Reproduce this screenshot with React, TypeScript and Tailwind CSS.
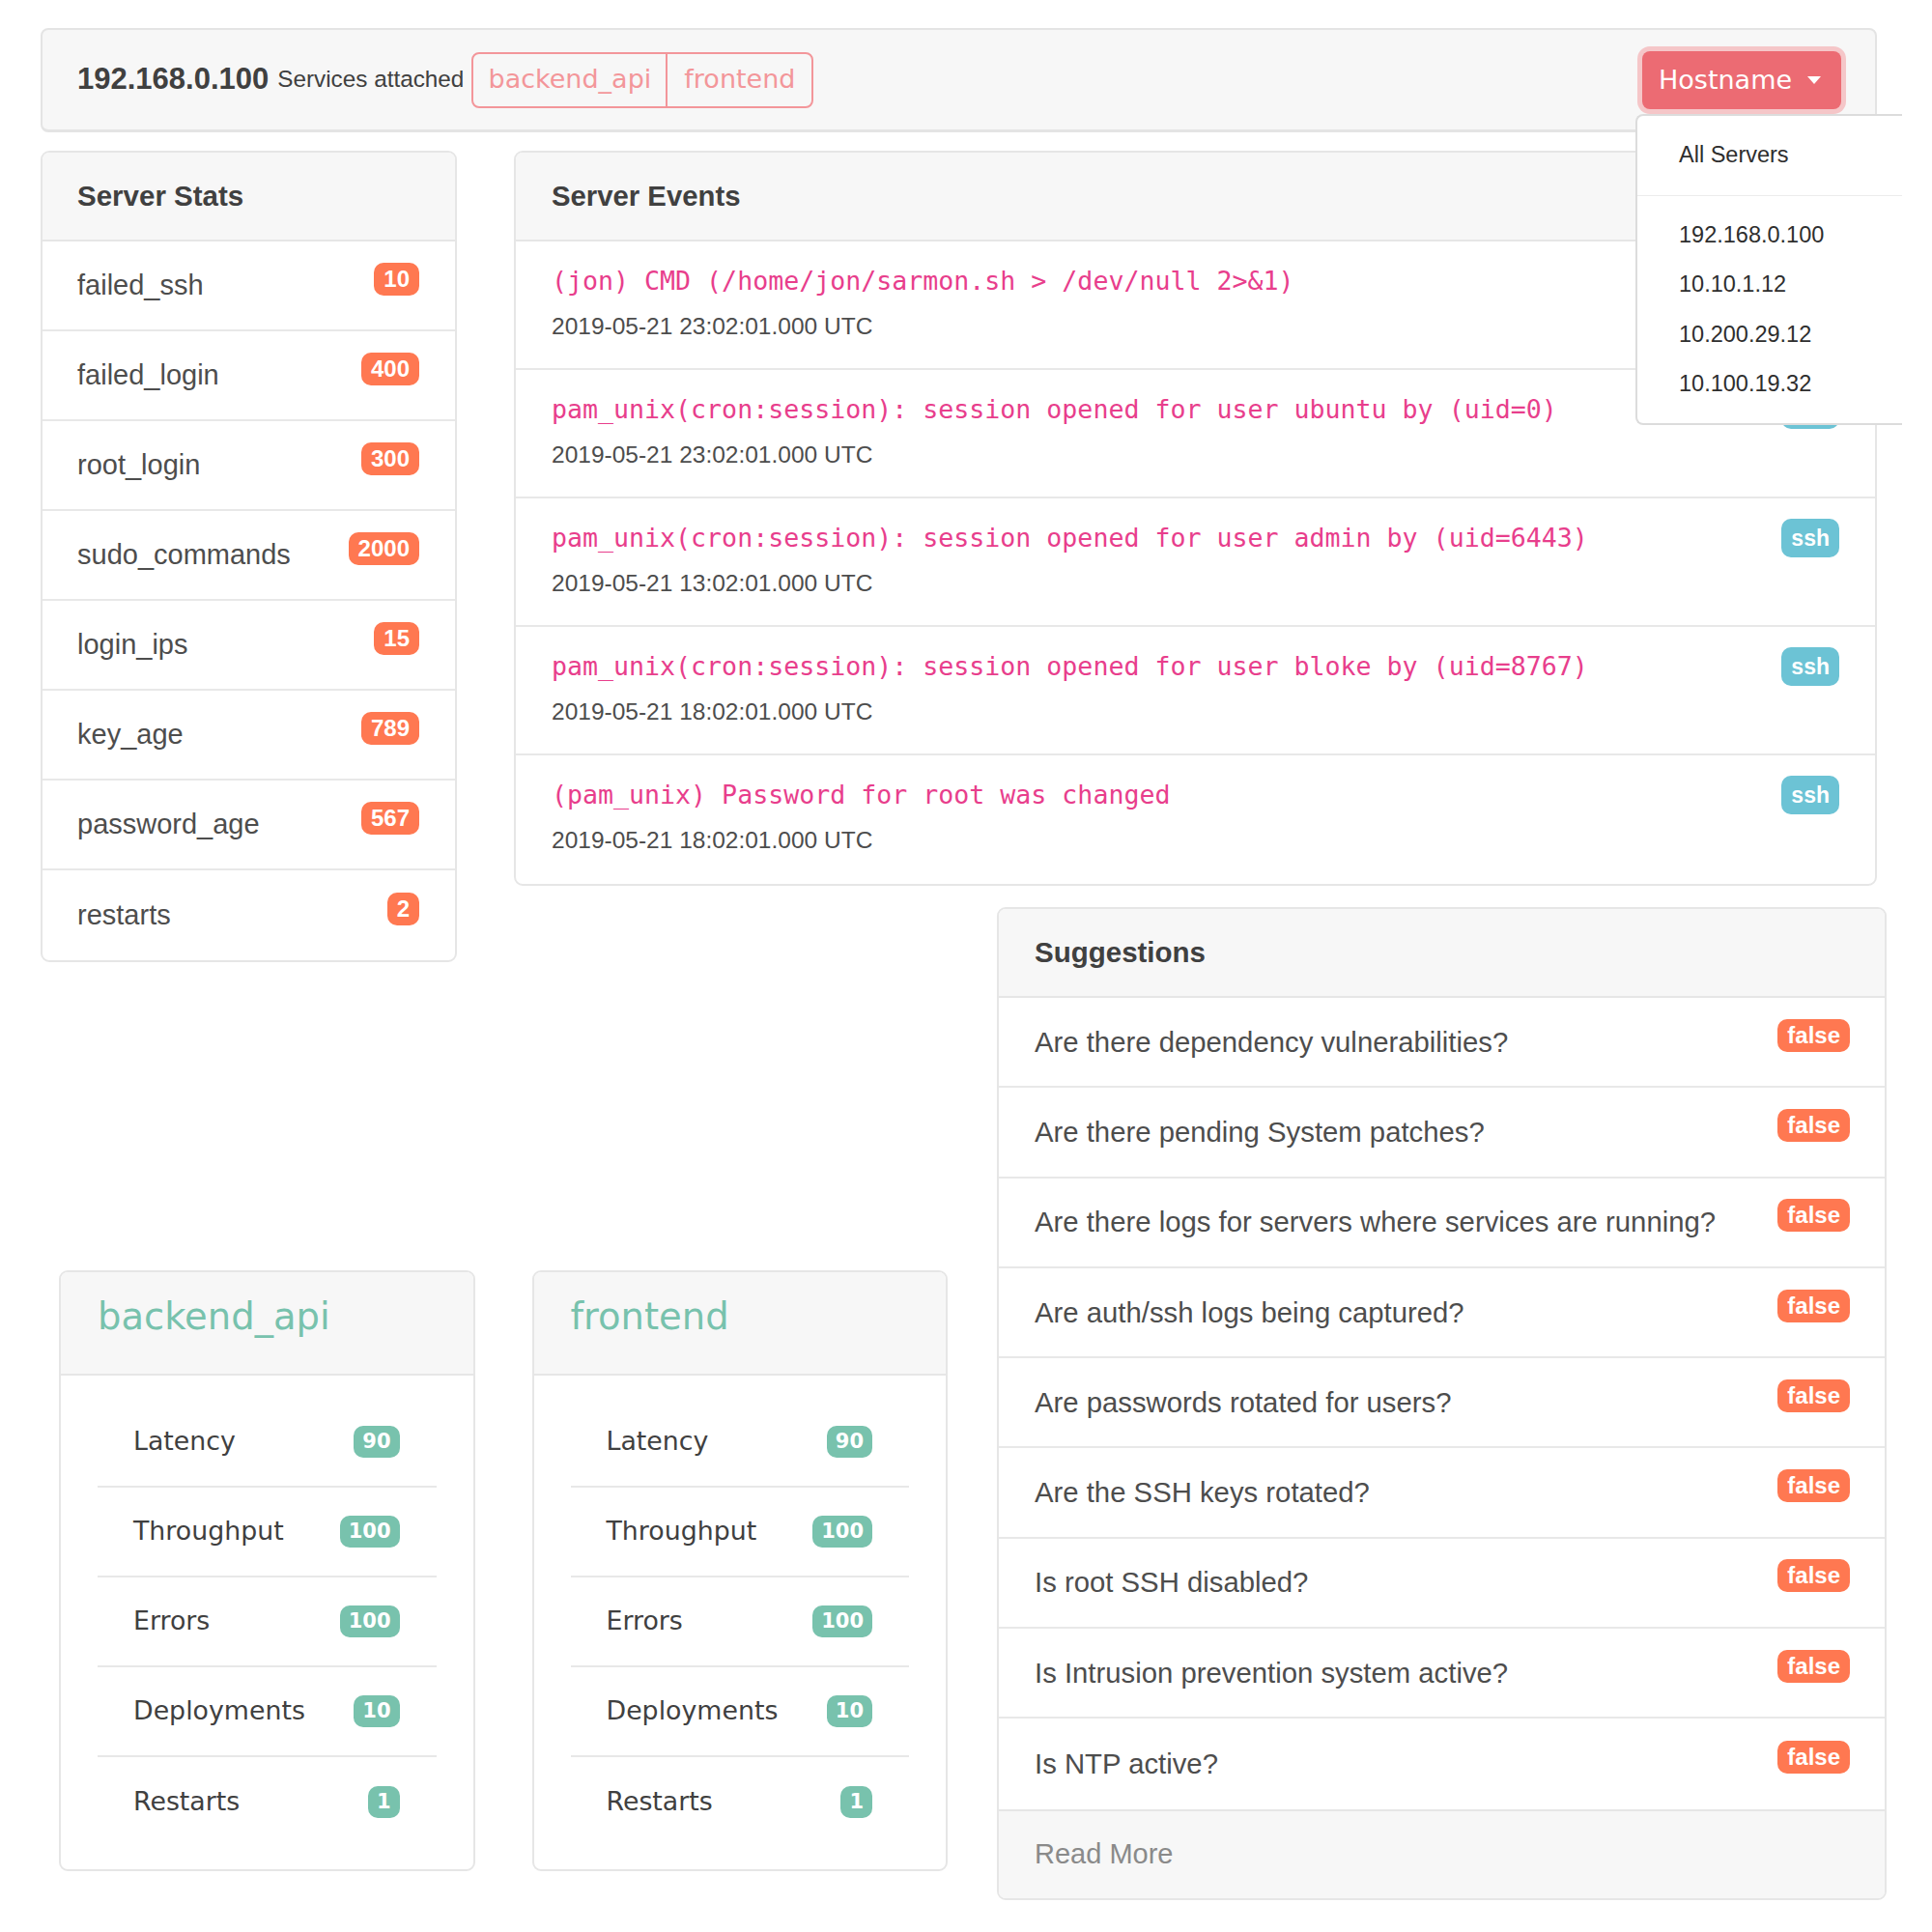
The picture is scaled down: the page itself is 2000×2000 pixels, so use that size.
import React from "react";

const statRows: [string, string][] = [
  ["failed_ssh", "10"],
  ["failed_login", "400"],
  ["root_login", "300"],
  ["sudo_commands", "2000"],
  ["login_ips", "15"],
  ["key_age", "789"],
  ["password_age", "567"],
  ["restarts", "2"],
];

const events: [string, string][] = [
  ["(jon) CMD (/home/jon/sarmon.sh > /dev/null 2>&1)", "2019-05-21 23:02:01.000 UTC"],
  ["pam_unix(cron:session): session opened for user ubuntu by (uid=0)", "2019-05-21 23:02:01.000 UTC"],
  ["pam_unix(cron:session): session opened for user admin by (uid=6443)", "2019-05-21 13:02:01.000 UTC"],
  ["pam_unix(cron:session): session opened for user bloke by (uid=8767)", "2019-05-21 18:02:01.000 UTC"],
  ["(pam_unix) Password for root was changed", "2019-05-21 18:02:01.000 UTC"],
];

const suggestions = [
  "Are there dependency vulnerabilities?",
  "Are there pending System patches?",
  "Are there logs for servers where services are running?",
  "Are auth/ssh logs being captured?",
  "Are passwords rotated for users?",
  "Are the SSH keys rotated?",
  "Is root SSH disabled?",
  "Is Intrusion prevention system active?",
  "Is NTP active?",
];

const serviceRows: [string, string][] = [
  ["Latency", "90"],
  ["Throughput", "100"],
  ["Errors", "100"],
  ["Deployments", "10"],
  ["Restarts", "1"],
];

function OrangeBadge({ children }: { children: React.ReactNode }) {
  return (
    <span className="mb-[14px] inline-flex h-[34px] items-center rounded-[10px] bg-[#ff7851] px-[10px] font-['Liberation_Sans',sans-serif] text-[24px] font-bold leading-none text-white">
      {children}
    </span>
  );
}

function ServiceCard({ name }: { name: string }) {
  return (
    <div className="w-[431px] overflow-hidden rounded-[9px] border-2 border-[#e6e6e6] bg-white">
      <div className="flex h-[107px] items-center border-b-2 border-[#e6e6e6] bg-[#f7f7f7] pb-[12px] pl-[38px]">
        <span className="font-['DejaVu_Sans',sans-serif] text-[38.5px] leading-none text-[#78c2ad]">{name}</span>
      </div>
      <div className="px-[38px] py-[23px]">
        <div className="divide-y-2 divide-[#e8e8e8]">
          {serviceRows.map(([label, val]) => (
            <div key={label} className="flex h-[93px] items-center justify-between pl-[37px] pr-[38px]">
              <span className="font-['DejaVu_Sans',sans-serif] text-[26.8px] text-[#404040]">{label}</span>
              <span className="inline-flex h-[33px] items-center rounded-[10px] bg-[#78c2ad] px-[9px] font-['DejaVu_Sans',sans-serif] text-[21px] font-bold leading-none text-white">
                {val}
              </span>
            </div>
          ))}
        </div>
      </div>
    </div>
  );
}

export default function App() {
  return (
    <div className="relative h-[2000px] w-[2000px] overflow-hidden bg-white font-['Liberation_Sans',sans-serif] text-[#4d4d4d]">
      {/* Top bar */}
      <div className="relative z-10 ml-[42px] mt-[29px] flex h-[108px] w-[1901px] items-center justify-between rounded-[8px] border-2 border-b-[3px] border-[#e4e4e4] bg-[#f7f7f7] pl-[36px] pr-[35px]">
        <div className="flex items-center">
          <span className="text-[31px] font-bold text-[#404040]">192.168.0.100</span>
          <span className="ml-[9px] text-[24.3px] text-[#404040]">Services attached</span>
          <div className="ml-[8px] flex h-[58px] overflow-hidden rounded-[8px] border-2 border-[#f3969a]">
            <div className="flex w-[201px] items-center justify-center border-r-2 border-[#f3969a] font-['DejaVu_Sans',sans-serif] text-[27px] text-[#f3969a]">
              backend_api
            </div>
            <div className="flex w-[149px] items-center justify-center font-['DejaVu_Sans',sans-serif] text-[27px] text-[#f3969a]">
              frontend
            </div>
          </div>
        </div>
        <div className="relative">
          <div className="flex h-[60px] w-[206px] items-center rounded-[8px] bg-[#ec6b73] pl-[17px] shadow-[0_0_0_5px_rgba(243,150,154,0.5)]">
            <span className="font-['DejaVu_Sans',sans-serif] text-[27px] leading-none text-white">Hostname</span>
            <span className="ml-[16px] h-0 w-0 border-x-[7px] border-t-[8px] border-x-transparent border-t-white" />
          </div>
          <div className="absolute left-[-7px] top-[65px] w-[276px] rounded-l-[8px] border-2 border-r-0 border-[#dcdcdc] bg-white pb-[14px] pt-[22px]">
            <div className="mb-[24px] pl-[43px] text-[23.5px] leading-[36px] text-[#2e2e2e]">All Servers</div>
            <div className="h-[1px] bg-[#ececec]" />
            <div className="pt-[15px]">
              {["192.168.0.100", "10.10.1.12", "10.200.29.12", "10.100.19.32"].map((ip) => (
                <div key={ip} className="flex h-[51.5px] items-center pl-[43px] text-[23.5px] text-[#2e2e2e]">
                  {ip}
                </div>
              ))}
            </div>
          </div>
        </div>
      </div>

      {/* Main grid */}
      <div className="ml-[42px] mt-[19px] grid grid-cols-[431px_59px_449px_51px_921px]">
        {/* Server Stats */}
        <div className="col-start-1 row-span-2 row-start-1 w-[431px] self-start overflow-hidden rounded-[9px] border-2 border-[#e6e6e6] bg-white">
          <div className="flex h-[92px] items-center border-b-2 border-[#e6e6e6] bg-[#f7f7f7] pl-[36px]">
            <span className="text-[29.5px] font-bold text-[#404040]">Server Stats</span>
          </div>
          <div className="divide-y-2 divide-[#e8e8e8]">
            {statRows.map(([k, v]) => (
              <div key={k} className="flex h-[93px] items-center justify-between pl-[36px] pr-[37px]">
                <span className="text-[29px]">{k}</span>
                <OrangeBadge>{v}</OrangeBadge>
              </div>
            ))}
          </div>
        </div>

        {/* Server Events */}
        <div className="col-span-3 col-start-3 row-start-1 w-[1411px] self-start overflow-hidden rounded-[9px] border-2 border-[#e6e6e6] bg-white">
          <div className="flex h-[92px] items-center border-b-2 border-[#e6e6e6] bg-[#f7f7f7] pl-[37px]">
            <span className="text-[29.3px] font-bold text-[#404040]">Server Events</span>
          </div>
          <div className="divide-y-2 divide-[#e8e8e8]">
            {events.map(([msg, date], i) => (
              <div key={i} className="h-[133px] pl-[37px] pr-[37px] pt-[24px]">
                <div className="flex h-[34px] items-center justify-between">
                  <span className="whitespace-pre font-['DejaVu_Sans_Mono',monospace] text-[26.6px] leading-none text-[#e83e8c]">
                    {msg}
                  </span>
                  <span className="inline-flex h-[40px] items-center rounded-[10px] bg-[#6cc3d5] px-[10px] text-[23px] font-bold leading-none text-white">
                    ssh
                  </span>
                </div>
                <div className="mt-[15px] text-[24.5px] leading-[30px]">{date}</div>
              </div>
            ))}
          </div>
        </div>

        {/* Service cards */}
        <div className="col-span-3 col-start-1 row-start-2 mb-[30px] ml-[19px] flex gap-[59px] self-end">
          <ServiceCard name="backend_api" />
          <ServiceCard name="frontend" />
        </div>

        {/* Suggestions */}
        <div className="col-start-5 row-start-2 mt-[22px] w-[921px] overflow-hidden rounded-[9px] border-2 border-[#e6e6e6] bg-white">
          <div className="flex h-[92px] items-center border-b-2 border-[#e6e6e6] bg-[#f7f7f7] pl-[37px]">
            <span className="text-[29.5px] font-bold text-[#404040]">Suggestions</span>
          </div>
          <div className="divide-y-2 divide-[#e8e8e8]">
            {suggestions.map((s) => (
              <div key={s} className="flex h-[93.3px] items-center justify-between pl-[37px] pr-[36px]">
                <span className="text-[29.3px]">{s}</span>
                <OrangeBadge>false</OrangeBadge>
              </div>
            ))}
          </div>
          <div className="flex h-[92px] items-center border-t-2 border-[#e6e6e6] bg-[#f7f7f7] pl-[37px]">
            <span className="text-[29px] text-[#8a8a8a]">Read More</span>
          </div>
        </div>
      </div>
    </div>
  );
}
